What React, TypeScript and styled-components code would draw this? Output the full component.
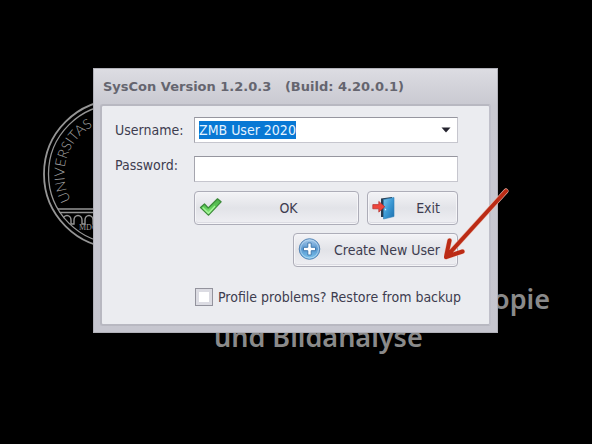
import React, { useEffect, useRef, useState } from "react";
import styled, { createGlobalStyle } from "styled-components";

const uiFont = `"DejaVu Sans Condensed", "DejaVu Sans", sans-serif`;
const titleFont = `"DejaVu Sans", "Noto Sans", sans-serif`;

const GlobalStyle = createGlobalStyle`
  *, *::before, *::after { box-sizing: border-box; }
  body { margin: 0; background: #000; }
`;

const Desktop = styled.main`
  position: relative;
  display: grid;
  place-items: center;
  min-height: 100vh;
  padding: 0 9px 44px 8px;
  overflow: hidden;
  background: #000;
  font: 14px/18px ${uiFont};
  color: #3d3c4f;
`;

const Wallpaper = styled.div`
  position: absolute;
  inset: 0;
  color: #8a8a8a;
`;

const Seal = styled.svg`
  position: absolute;
  left: 42px;
  top: 98px;
`;

const Tagline = styled.p`
  position: absolute;
  left: 214px;
  top: 280px;
  display: flex;
  flex-direction: column;
  width: 336px;
  margin: 0;
  font: 600 27px/38px "Noto Sans", "Open Sans", sans-serif;
`;

const TaglineLine = styled.span<{ $end?: boolean }>`
  align-self: ${(p) => (p.$end ? "flex-end" : "flex-start")};
`;

const Dialog = styled.section`
  position: relative;
  width: 100%;
  max-width: 405px;
  padding: 0 6px 6px;
  border: 1px solid #b1b1b9;
  background: linear-gradient(#dcdce2, #c9c9d1 36px, #c6c6cf);
`;

const TitleBar = styled.h1`
  margin: 0;
  padding: 2px 3px 0;
  height: 35px;
  font: bold 13px/32px ${titleFont};
  color: #65656f;
  white-space: pre;
`;

const Panel = styled.form`
  display: grid;
  grid-template-columns: 79px minmax(0, 1fr);
  row-gap: 13px;
  padding: 11px 31px 18px 13px;
  border: 2px solid #b8b8c1;
  border-right-color: #c0c0ca;
  border-radius: 3px;
  background: #ebecf0;
`;

const FieldLabel = styled.label<{ $raised?: boolean }>`
  padding-top: ${(p) => (p.$raised ? 0 : 4)}px;
`;

const Field = styled.div`
  display: flex;
  height: 26px;
  border: 1px solid #c6c6ce;
  border-top-color: #96969f;
  border-left-color: #a5a5ae;
  background: #fff;
`;

const TextInput = styled.input`
  flex: 1;
  min-width: 0;
  align-self: center;
  height: 18px;
  padding: 0 4px;
  border: 0;
  outline: 0;
  background: transparent;
  font: 14px/18px ${uiFont};
  color: #3d3c4f;

  &::selection {
    background: #0878d4;
    color: #e4f3ff;
  }
`;

const DropButton = styled.button`
  display: grid;
  place-items: center;
  width: 22px;
  padding: 0;
  border: 0;
  background: transparent;
`;

const Actions = styled.div`
  grid-column: 2;
  display: grid;
  grid-template-columns: minmax(0, 1fr) 91px;
  gap: 8px;
  margin-top: -4px;
`;

const ActionButton = styled.button<{ $wide?: boolean }>`
  position: relative;
  display: flex;
  align-items: center;
  height: 34px;
  padding: 0 4px;
  border: 1px solid #adadb8;
  border-radius: 4px;
  background: linear-gradient(#f3f3f6, #e2e3e8 50%, #efeff3);
  box-shadow: inset 0 0 0 1px #f5f5f8, inset 0 -1px 0 1px #dcdce3;
  font: 14px/20px ${uiFont};
  color: #3d3c4f;
  ${(p) => p.$wide && "grid-column: 1 / -1; justify-self: end; width: 165px;"}
`;

const ButtonText = styled.span`
  flex: 1;
  text-align: center;
  white-space: nowrap;
`;

const EndText = styled(ButtonText)`
  padding-right: 13px;
  text-align: right;
`;

const Pointer = styled.svg`
  position: absolute;
  right: -59px;
  top: -50px;
  pointer-events: none;
`;

const Restore = styled.label`
  grid-column: 2;
  display: flex;
  align-items: center;
  gap: 5px;
  margin: 8px -24px 0 1px;
  height: 18px;
  white-space: nowrap;
`;

const CheckBox = styled.input`
  appearance: none;
  flex: none;
  width: 18px;
  height: 18px;
  margin: 0;
  border: 1px solid #93939d;
  background: #fff;
  box-shadow: inset 0 0 0 3px #dcdce3;

  &:checked {
    background: #3d3c4f;
  }
`;

const CheckIcon = () => (
  <svg width="24" height="20" viewBox="0 0 24 20" aria-hidden="true">
    <defs>
      <linearGradient id="tick" x1="0" y1="0" x2="0" y2="1">
        <stop offset="0" stopColor="#4fae4c" />
        <stop offset="0.5" stopColor="#5ccb57" />
        <stop offset="1" stopColor="#9af18c" />
      </linearGradient>
    </defs>
    <path
      d="M1.5 9.500 5.500 6l3.700 4L18.500.800l3.600 3L9.600 17.200Z"
      fill="url(#tick)"
      stroke="#3c8a3a"
      strokeWidth="1.2"
      strokeLinejoin="round"
    />
    <path d="m3.6 9.500 5.800 5.800L16 8" fill="none" stroke="#a5f598" strokeWidth="1.3" />
  </svg>
);

const DoorIcon = () => (
  <svg width="24" height="24" viewBox="0 0 24 24" aria-hidden="true">
    <defs>
      <linearGradient id="door" x1="0" y1="0" x2="1" y2="1">
        <stop offset="0" stopColor="#7cc5ec" />
        <stop offset="0.5" stopColor="#3b98d3" />
        <stop offset="1" stopColor="#1b6fae" />
      </linearGradient>
    </defs>
    <path d="M9 2.500 20 1v20H9Z" fill="#273c50" />
    <path d="m11.500 3.500 10.500-2v19l-10.500 2.500Z" fill="url(#door)" stroke="#2b80b9" strokeWidth="0.6" />
    <path d="M13.5 12.800v1.500" stroke="#d4effc" strokeWidth="1.3" />
    <path
      d="M.8 8.600h6V5.4l6 5.4-6 5.3v-3.3h-6Z"
      fill="#ee463c"
      stroke="#b32b2a"
      strokeWidth="0.7"
      strokeLinejoin="round"
    />
  </svg>
);

const PlusIcon = () => (
  <svg width="24" height="24" viewBox="0 0 24 24" aria-hidden="true">
    <defs>
      <linearGradient id="plus" x1="0" y1="0" x2="0" y2="1">
        <stop offset="0" stopColor="#a9caea" />
        <stop offset="0.5" stopColor="#5796cf" />
        <stop offset="1" stopColor="#7cc6ee" />
      </linearGradient>
    </defs>
    <circle cx="11.500" cy="11" r="10.3" fill="url(#plus)" stroke="#5686b6" strokeWidth="1" />
    <circle cx="11.500" cy="11" r="9" fill="none" stroke="#b9d9f1" strokeWidth="0.8" />
    <path
      d="M9.800 5h3.4v4.3h4.300v3.4h-4.3V17H9.800v-4.3H5.500V9.300h4.3Z"
      fill="#fff"
      stroke="#417bb0"
      strokeWidth="1"
    />
  </svg>
);

const PointerArrow = () => (
  <Pointer width="72" height="84" viewBox="0 0 72 84" aria-hidden="true">
    <g fill="none" strokeLinecap="round" strokeLinejoin="round">
      <path d="M62 7 2 73M5.500 56.500 2 73 18.500 67.500" stroke="#e8b6aa" strokeWidth="5" />
      <path d="M62 7 2 73M5.500 56.500 2 73 18.500 67.500" stroke="#bb2b15" strokeWidth="4" />
    </g>
  </Pointer>
);

const UniversitySeal = () => (
  <Seal width="152" height="152" viewBox="0 0 152 152" aria-hidden="true">
    <defs>
      <path id="motto" d="M29 102A54 54 0 0 1 76 22" />
      <clipPath id="disc">
        <circle cx="76" cy="76" r="70" />
      </clipPath>
    </defs>
    <g fill="none" stroke="#959595">
      <circle cx="76" cy="76" r="74" strokeWidth="1.800" />
      <circle cx="76" cy="76" r="69.500" strokeWidth="1.300" />
      <g clipPath="url(#disc)">
        <path d="M0 111h152M0 114.500h152" strokeWidth="1.400" />
        <path
          d="M21 126v-4a4 4.500 0 0 1 8 0v4h3v-4a4 4.500 0 0 1 8 0v4h3v-4a4 4.500 0 0 1 8 0v4h3v-4a4 4.500 0 0 1 8 0v4"
          strokeWidth="1.400"
        />
      </g>
    </g>
    <text fill="#a4a4a4" fontFamily="Lato, sans-serif" fontSize="14" fontWeight="300">
      <textPath href="#motto">UNIVERSITAS</textPath>
    </text>
    <text x="37" y="132" fill="#9a9a9a" fontFamily="Liberation Serif, serif" fontSize="8">
      MDCCC
    </text>
  </Seal>
);

export default function App() {
  const [user, setUser] = useState("ZMB User 2020");
  const userRef = useRef<HTMLInputElement>(null);

  useEffect(() => {
    userRef.current?.focus();
    userRef.current?.select();
  }, []);

  return (
    <Desktop>
      <GlobalStyle />
      <Wallpaper>
        <UniversitySeal />
        <Tagline>
          <TaglineLine $end>opie</TaglineLine>
          <TaglineLine>und Bildanalyse</TaglineLine>
        </Tagline>
      </Wallpaper>
      <Dialog role="dialog" aria-labelledby="title">
        <TitleBar id="title">{"SysCon Version 1.2.0.3   (Build: 4.20.0.1)"}</TitleBar>
        <Panel onSubmit={(e) => e.preventDefault()}>
          <FieldLabel htmlFor="username">Username:</FieldLabel>
          <Field>
            <TextInput
              id="username"
              ref={userRef}
              value={user}
              autoComplete="off"
              spellCheck={false}
              onChange={(e) => setUser(e.target.value)}
            />
            <DropButton type="button" aria-label="Show users">
              <svg width="10" height="6" viewBox="0 0 10 6" aria-hidden="true">
                <path d="M.5.500h9L5 5.500Z" fill="#25242f" />
              </svg>
            </DropButton>
          </Field>
          <FieldLabel htmlFor="password" $raised>
            Password:
          </FieldLabel>
          <Field>
            <TextInput id="password" type="password" />
          </Field>
          <Actions>
            <ActionButton type="submit">
              <CheckIcon />
              <ButtonText>OK</ButtonText>
            </ActionButton>
            <ActionButton type="button">
              <DoorIcon />
              <EndText>Exit</EndText>
            </ActionButton>
            <ActionButton type="button" $wide>
              <PlusIcon />
              <EndText>Create New User</EndText>
              <PointerArrow />
            </ActionButton>
          </Actions>
          <Restore>
            <CheckBox type="checkbox" />
            Profile problems? Restore from backup
          </Restore>
        </Panel>
      </Dialog>
    </Desktop>
  );
}
